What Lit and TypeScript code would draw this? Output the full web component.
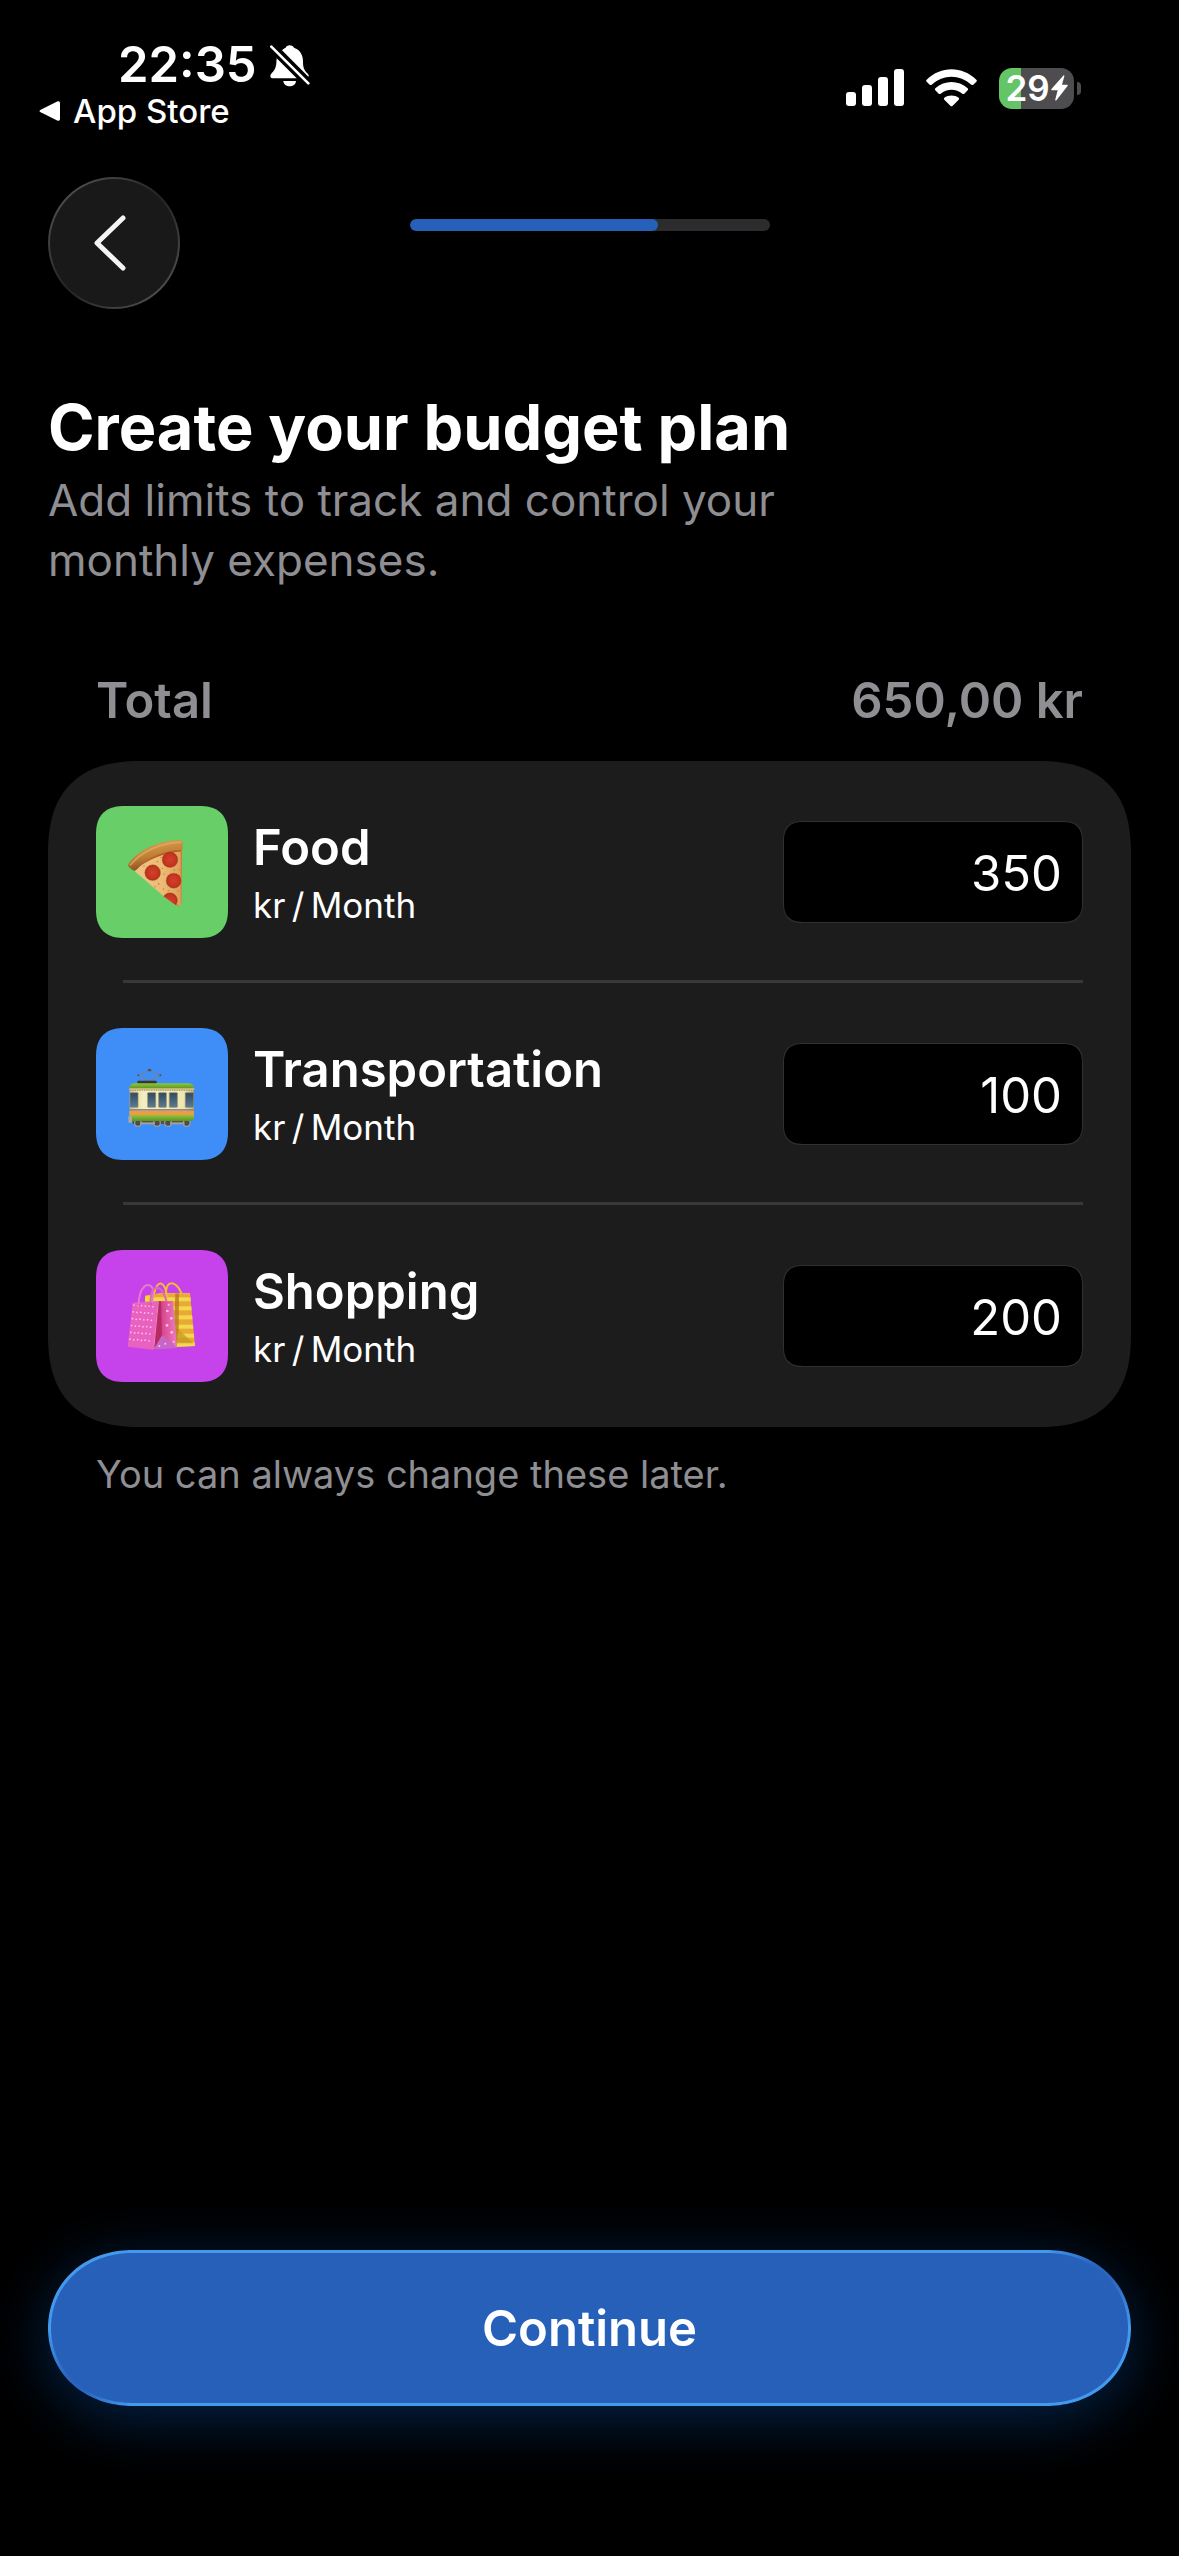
import { LitElement, html, css, svg } from "lit";
import { customElement, property, state } from "lit/decorators.js";

type Category = { id: string; name: string; art: string; limit: number };

const pizza = svg`
  <svg class="art" viewBox="48 48 396 396" aria-hidden="true">
    <defs>
      <linearGradient id="cheese" x1="0" y1="0" x2="1" y2="0">
        <stop offset="0" stop-color="#efc88a" /><stop offset=".6" stop-color="#ecbb75" /><stop offset="1" stop-color="#dd9550" />
      </linearGradient>
      <linearGradient id="crust" x1=".3" y1="0" x2=".6" y2="1">
        <stop offset="0" stop-color="#dba052" /><stop offset=".5" stop-color="#c08137" /><stop offset="1" stop-color="#7c4318" />
      </linearGradient>
      <radialGradient id="salami"><stop offset="0" stop-color="#d3402a" /><stop offset=".8" stop-color="#c53420" /><stop offset="1" stop-color="#9c2414" /></radialGradient>
      <clipPath id="slice"><path d="M160 240 Q220 185 306 172 L304 335 Q303 347 297 349 Q290 349 250 318Z" /></clipPath>
    </defs>
    <g clip-path="url(#slice)">
      <rect x="140" y="150" width="180" height="210" fill="url(#cheese)" />
      <path d="M160 240 Q215 190 306 180" fill="none" stroke="#bd5a24" stroke-width="7" />
      <path d="M304 180V345M298 350L250 318" stroke="#c87a38" stroke-width="4" fill="none" />
      <g fill="url(#salami)" stroke="#b5722f" stroke-width="1.5">
        <circle cx="218" cy="248" r="23.500" /><circle cx="270" cy="209" r="23.500" />
        <circle cx="281" cy="272" r="22.500" /><circle cx="270" cy="331" r="22.500" />
      </g>
      <g fill="#cd6f3a">
        <circle cx="232" cy="215" r="2" /><circle cx="247" cy="235" r="2" /><circle cx="252" cy="252" r="2" />
        <circle cx="236" cy="282" r="2.500" /><circle cx="250" cy="297" r="2" /><circle cx="265" cy="302" r="2" />
        <circle cx="283" cy="240" r="2" /><circle cx="298" cy="238" r="2" /><circle cx="225" cy="290" r="2" />
        <circle cx="192" cy="228" r="2" /><circle cx="294" cy="303" r="2" /><circle cx="243" cy="202" r="2" />
      </g>
    </g>
    <path d="M145 222 C172 184 230 151 302 150 Q308 151 308 158 V178 Q307 181 302 180 C248 182 200 204 168 241 Q163 244 158 240 L147 232 Q143 227 145 222Z" fill="url(#crust)" />
    <path d="M152 224 C182 187 236 159 302 157" fill="none" stroke="#e3ae63" stroke-width="6" stroke-linecap="round" opacity=".7" />
  </svg>`;

const tramWindow = (x: number, w: number) => svg`
  <rect x=${x} y="248" width=${w} height="44" rx="2" fill="url(#glass)" stroke="#8e8a68" stroke-width="2" />`;

const tram = svg`
  <svg class="art" viewBox="48 54 396 396" aria-hidden="true">
    <defs>
      <linearGradient id="glass" x1="0" y1="0" x2="0" y2="1">
        <stop offset="0" stop-color="#31495e" /><stop offset="1" stop-color="#5b7b92" />
      </linearGradient>
      <linearGradient id="roof" x1="0" y1="0" x2="0" y2="1">
        <stop offset="0" stop-color="#8fc63c" /><stop offset="1" stop-color="#5c9420" />
      </linearGradient>
      <linearGradient id="body" x1="0" y1="0" x2="1" y2="0">
        <stop offset="0" stop-color="#cfc58a" /><stop offset=".2" stop-color="#f4edc0" /><stop offset=".85" stop-color="#eee5b0" /><stop offset="1" stop-color="#bdb27a" />
      </linearGradient>
    </defs>
    <path d="M208 181L175 196L208 213L242 196Z" fill="none" stroke="#7d7f85" stroke-width="3" />
    <g fill="#55504f"><rect x="203" y="177" width="11" height="7" rx="3" /><circle cx="175" cy="196" r="3" /><circle cx="241" cy="196" r="3" /></g>
    <rect x="172" y="212" width="58" height="10" rx="3" fill="#3b3532" />
    <rect x="158" y="332" width="172" height="10" fill="#54504a" />
    <g fill="#4b4b50" stroke="#a09c98" stroke-width="3.500">
      <circle cx="174" cy="339" r="10" /><circle cx="231" cy="339" r="10" /><circle cx="264" cy="339" r="10" /><circle cx="320" cy="339" r="10" />
    </g>
    <g fill="#a39e98"><rect x="180" y="337" width="45" height="6" /><rect x="270" y="337" width="44" height="6" /></g>
    <rect x="149" y="230" width="192" height="72" fill="url(#body)" />
    <path d="M148 236 Q148 220 166 220 H325 Q341 220 342 236Z" fill="url(#roof)" />
    <path d="M148 238H343" stroke="#cdbf84" stroke-width="6" /><path d="M150 241H342" stroke="#8a7d4d" stroke-width="2" stroke-dasharray="4 3" />
    ${tramWindow(150, 24)}${tramWindow(203, 24)}${tramWindow(236, 23)}${tramWindow(268, 24)}${tramWindow(316, 25)}
    <rect x="147" y="297" width="196" height="5" fill="#908b80" />
    <rect x="148" y="303" width="194" height="13" fill="#f09a45" />
    <path d="M148 315H342V324Q341 333 331 333H158Q149 333 148 324Z" fill="url(#roof)" />
    <rect x="145" y="318" width="11" height="20" rx="2" fill="#a9a99c" />
  </svg>`;

const dots = [0, 1, 2, 3, 4, 5].flatMap((r) =>
  [0, 1, 2, 3, 4, 5].map((c) => svg`<circle cx=${162 - r * 2.4 + c * 11.4} cy=${225 + r * 20.5 + c * 0.8 + (c % 2)} r="2.600" />`),
);

const bags = svg`
  <svg class="art" viewBox="48 60 396 396" aria-hidden="true">
    <defs>
      <clipPath id="gold"><path d="M196 197 L240 190 L330 190 L345 348 L285 351 L194 300Z" /></clipPath>
      <linearGradient id="side" x1="0" y1="0" x2="1" y2="0">
        <stop offset="0" stop-color="#b52560" /><stop offset=".4" stop-color="#d9488f" /><stop offset="1" stop-color="#ee7cc4" />
      </linearGradient>
    </defs>
    <g clip-path="url(#gold)">
      <rect x="190" y="185" width="160" height="170" fill="#e9a934" />
      <g fill="#f1d84f">
        <rect x="190" y="185" width="160" height="7" /><rect x="190" y="202" width="160" height="12" /><rect x="190" y="229" width="160" height="12" />
        <rect x="190" y="256" width="160" height="12" /><rect x="190" y="284" width="160" height="12" /><rect x="190" y="311" width="160" height="12" /><rect x="190" y="337" width="160" height="14" />
      </g>
      <path d="M286 188H297L296 300L290 351H280Z" fill="#b6741a" opacity=".75" />
      <path d="M296 299L340 340L290 340Z" fill="#c79a24" opacity=".75" />
      <rect x="194" y="196" width="24" height="18" fill="#f3dc2c" />
    </g>
    <path d="M222 192C232 148 254 150 261 200M259 198C252 148 290 150 304 189" fill="none" stroke="#f0be34" stroke-width="6" stroke-linecap="round" />
    <path d="M158 218L234 214L220 359L143 350Z" fill="#ea62c0" />
    <path d="M234 214L279 213L291 353L220 359Z" fill="url(#side)" />
    <path d="M234 214L220 359L246 316L243 214Z" fill="#b82a64" />
    <path d="M247 315L291 353L220 359Z" fill="#c666c8" />
    <path d="M235 214L221 357" stroke="#f59bd6" stroke-width="2.500" />
    <g fill="#fac0ea">${dots}
      <circle cx="262" cy="243" r="4" /><circle cx="274" cy="265" r="4" /><circle cx="261" cy="286" r="4" /><circle cx="275" cy="307" r="4" />
      <circle cx="266" cy="224" r="3" /><circle cx="281" cy="335" r="3" /><circle cx="256" cy="341" r="3" /><circle cx="238" cy="348" r="3" />
    </g>
    <g fill="#9c2a70"><circle cx="176" cy="224" r="3.500" /><circle cx="212" cy="222" r="3.500" /></g>
    <path d="M175 229C178 160 208 155 218 175C222 185 216 205 217 215" fill="none" stroke="#e77bcb" stroke-width="6" stroke-linecap="round" />
    <path d="M212 228C207 160 245 155 259 213" fill="none" stroke="#dd68b9" stroke-width="6" stroke-linecap="round" />
  </svg>`;

const artwork: Record<string, unknown> = { food: pizza, transport: tram, shopping: bags };

const squircle = css`
  @supports (corner-shape: superellipse(1.32)) {
    .card { border-radius: 94px; corner-shape: superellipse(1.32); }
    .tile { border-radius: 29px; corner-shape: superellipse(1.32); }
    .amount { border-radius: 20px; corner-shape: superellipse(1.32); }
    .continue { border-radius: 84px / 78px; corner-shape: superellipse(1.05); }
  }
`;

@customElement("status-bar")
export class StatusBar extends LitElement {
  static styles = css`
    :host { display: block; }
    .bar { display: flex; justify-content: space-between; padding: 40px 98px 0 39px; height: 137px; box-sizing: content-box; }
    .left { display: flex; flex-direction: column; }
    .clock { display: flex; align-items: center; gap: 13px; padding-left: 79px; font-size: 49px; line-height: 50px; font-weight: 600; }
    .bell { width: 40px; height: 44px; }
    .return { display: flex; align-items: center; gap: 12px; font-size: 33px; line-height: 42px; font-weight: 500; color: #fff; text-decoration: none; }
    .arrow { width: 22px; height: 22px; }
    .right { display: flex; align-items: center; height: 96px; gap: 22px; }
    .signal { width: 58px; height: 38px; }
    .wifi { width: 51px; height: 38px; }
    .power { display: flex; align-items: center; gap: 3px; }
    .battery { display: flex; align-items: center; justify-content: center; gap: 1px; width: 75px; height: 41px; border-radius: 13px; font-size: 35px; line-height: 41px; font-weight: 600; background: linear-gradient(90deg, #65c466 22px, #4d4d4f 22px); }
    .bolt { width: 17px; height: 26px; }
    .nub { width: 4px; height: 13px; border-radius: 0 4px 4px 0; background: #4d4d4f; }
  `;

  render() {
    return html`
      <div class="bar">
        <div class="left">
          <div class="clock">
            <span>22:35</span>
            <svg class="bell" viewBox="0 0 120 132" fill="#fff" aria-label="Silent">
              <path d="M36 22C41 16 45 15 47 14C49 4 69 4 72 14C90 20 99 36 99 56C99 72 102 82 112 91C117 96 117 99 115 101Z" />
              <path d="M20 46L80 106H10C1 106 -1 99 3 93C10 85 18 78 19 60Z" />
              <path d="M4 11L115 121" stroke="#fff" stroke-width="8" stroke-linecap="round" />
              <path d="M40 114H78C77 135 41 135 40 114Z" />
            </svg>
          </div>
          <a class="return" href="#app-store">
            <svg class="arrow" viewBox="0 0 66 66" fill="#fff" aria-hidden="true">
              <path d="M5 29L56 4Q63 2 63 9V57Q63 64 56 62L5 37Q-2 33 5 29Z" />
            </svg>
            <span>App Store</span>
          </a>
        </div>
        <div class="right">
          <svg class="signal" viewBox="0 0 58 38" fill="#fff" aria-label="Signal">
            <rect y="23" width="10" height="14" rx="3" /><rect x="16" y="16" width="10" height="21" rx="3" />
            <rect x="32" y="8" width="10" height="29" rx="3" /><rect x="48" width="10" height="37" rx="3" />
          </svg>
          <svg class="wifi" viewBox="0 0 153 114" fill="#fff" aria-label="Wi-Fi">
            <path d="M2 32C44 -10 109 -10 151 32Q154 35 151 38L142 47Q139 49 136 47C102 15 51 15 17 47Q14 49 11 47L2 38Q-1 35 2 32Z" />
            <path d="M28 58C56 33 97 33 125 58Q128 61 125 64L115 74Q112 76 109 74C90 58 63 58 44 74Q41 76 38 74L28 64Q25 61 28 58Z" />
            <path d="M55 86C67 77 86 77 98 86Q101 89 98 92L80 110Q76.500 113 73 110L55 92Q52 89 55 86Z" />
          </svg>
          <div class="power">
            <div class="battery">
              <span>29</span>
              <svg class="bolt" viewBox="0 0 51 78" fill="#fff" aria-hidden="true">
                <path d="M38 1Q41 0 40 4L33 29H48Q52 30 49 34L17 75Q12 79 13 73L20 46H3Q-1 45 2 41Z" />
              </svg>
            </div>
            <div class="nub"></div>
          </div>
        </div>
      </div>
    `;
  }
}

@customElement("budget-row")
export class BudgetRow extends LitElement {
  @property({ attribute: false }) item!: Category;

  static styles = [
    css`
      :host { display: block; }
      .row { display: flex; align-items: center; gap: 25px; padding: 45px 48px; }
      .tile { flex: none; width: 132px; height: 132px; border-radius: 24px; overflow: hidden; }
      .food { background: #68ce67; }
      .transport { background: #3f8ef7; }
      .shopping { background: #c643eb; }
      .art { display: block; width: 100%; height: 100%; }
      .text { flex: 1; display: flex; flex-direction: column; gap: 5px; }
      .name { font-size: 49px; line-height: 60px; font-weight: 600; }
      .unit { font-size: 35px; line-height: 44px; }
      .amount { box-sizing: border-box; width: 300px; height: 102px; margin: 0; padding: 2px 20px 0; border: 1px solid #303032; border-radius: 18px; background: #000; color: #fff; font: inherit; font-size: 49px; text-align: right; outline: none; }
    `,
    squircle,
  ];

  private changed(e: Event) {
    const limit = Number((e.target as HTMLInputElement).value) || 0;
    this.dispatchEvent(new CustomEvent("limit", { detail: { id: this.item.id, limit } }));
  }

  render() {
    const { id, name, art, limit } = this.item;
    return html`
      <div class="row">
        <div class="tile ${art}">${artwork[art]}</div>
        <label class="text" for=${id}>
          <span class="name">${name}</span>
          <span class="unit">kr\u2009/\u2009Month</span>
        </label>
        <input class="amount" id=${id} type="text" inputmode="numeric" .value=${String(limit)} @input=${this.changed} />
      </div>
    `;
  }
}

@customElement("app-root")
export class AppRoot extends LitElement {
  @state() private items: Category[] = [
    { id: "food", name: "Food", art: "food", limit: 350 },
    { id: "transport", name: "Transportation", art: "transport", limit: 100 },
    { id: "shopping", name: "Shopping", art: "shopping", limit: 200 },
  ];

  static styles = [
    css`
      :host { display: block; background: #000; color: #fff; font-family: Inter, "Liberation Sans", sans-serif; }
      .screen { display: flex; flex-direction: column; min-height: 100vh; }
      .nav { display: grid; grid-template-columns: 1fr 360px 1fr; padding: 0 48px; }
      .back { display: flex; align-items: center; justify-content: center; width: 132px; height: 132px; padding: 0 9px 0 0; box-sizing: border-box; border: 2px solid transparent; border-radius: 50%; background: linear-gradient(#191919, #191919) padding-box, linear-gradient(135deg, #505050 10%, #232323 50%, #505050 90%) border-box; }
      .chevron { width: 32px; height: 56px; }
      .track { margin-top: 42px; height: 12px; border-radius: 6px; background: #2c2c2e; overflow: hidden; }
      .fill { height: 100%; border-radius: 6px; background: #2760b9; }
      .main { flex: 1; padding: 79px 48px 0; }
      .title { margin: 0; font-size: 63px; line-height: 78px; font-weight: 700; }
      .lead { margin: 4px 0 0; max-width: 760px; font-size: 44px; line-height: 60px; color: #8e8e93; }
      .total { display: flex; justify-content: space-between; padding: 81px 48px 30px; font-size: 49px; line-height: 60px; font-weight: 600; color: #8e8e93; }
      .card { border-radius: 78px; background: #1c1c1c; }
      .line { height: 3px; margin: -3px 48px 0 75px; background: #38383a; }
      .note { margin: 23px 48px 0; font-size: 38px; line-height: 48px; color: #8e8e93; }
      .footer { padding: 0 48px 150px; }
      .continue { display: block; width: 100%; height: 156px; padding: 0; color: #fff; font: inherit; font-size: 49px; font-weight: 600; border: 3px solid transparent; border-radius: 78px;
        background:
          linear-gradient(#2760b9, #2760b9) padding-box,
          radial-gradient(circle at 28px calc(100% - 22px), #2a64bf 10px, transparent 60px) border-box,
          radial-gradient(circle at calc(100% - 28px) 22px, #2a64bf 10px, transparent 60px) border-box,
          linear-gradient(#4399ee, #4399ee) border-box;
        box-shadow: 0 12px 60px rgba(10, 90, 190, 0.4); }
    `,
    squircle,
  ];

  private setLimit(e: CustomEvent<{ id: string; limit: number }>) {
    this.items = this.items.map((i) => (i.id === e.detail.id ? { ...i, limit: e.detail.limit } : i));
  }

  render() {
    const total = this.items.reduce((sum, i) => sum + i.limit, 0);
    return html`
      <div class="screen">
        <status-bar></status-bar>
        <nav class="nav">
          <button class="back" aria-label="Back">
            <svg class="chevron" viewBox="0 0 32 56" fill="none" stroke="#f4f4f4" stroke-width="5" stroke-linecap="round" stroke-linejoin="round" aria-hidden="true">
              <path d="M29 3L3 28L29 53" />
            </svg>
          </button>
          <div class="track" role="progressbar" aria-label="Setup" aria-valuenow="69">
            <div class="fill" style="width: 69%"></div>
          </div>
        </nav>
        <main class="main">
          <h1 class="title">Create your budget plan</h1>
          <p class="lead">Add limits to track and control your monthly expenses.</p>
          <div class="total"><span>Total</span><span>${total.toFixed(2).replace(".", ",")} kr</span></div>
          <div class="card">
            ${this.items.map(
              (item, i) => html`
                <budget-row .item=${item} @limit=${this.setLimit}></budget-row>
                ${i < this.items.length - 1 ? html`<div class="line"></div>` : null}
              `,
            )}
          </div>
          <p class="note">You can always change these later.</p>
        </main>
        <footer class="footer"><button class="continue">Continue</button></footer>
      </div>
    `;
  }
}
